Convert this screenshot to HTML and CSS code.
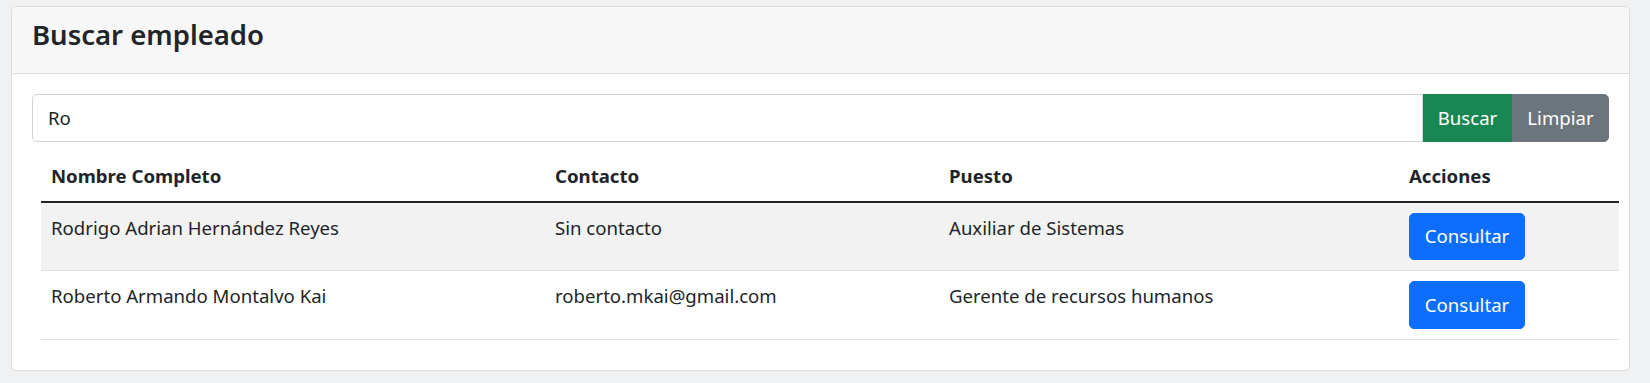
FILE: index.html
```html
<!DOCTYPE html>
<html lang="es">
<head>
<meta charset="utf-8">
<title>Buscar empleado</title>
<link rel="stylesheet" href="styles.css">
</head>
<body>
<div class="page">
  <div class="card">
    <div class="card-header">
      <h4 class="title">Buscar empleado</h4>
    </div>
    <div class="card-body">
      <div class="input-group">
        <input class="form-control" type="text" value="Ro">
        <button class="btn btn-success">Buscar</button>
        <button class="btn btn-secondary">Limpiar</button>
      </div>
      <div class="table-wrap">
        <table class="table">
          <colgroup>
            <col class="c1"><col class="c2"><col class="c3"><col class="c4">
          </colgroup>
          <thead>
            <tr>
              <th>Nombre Completo</th>
              <th>Contacto</th>
              <th>Puesto</th>
              <th>Acciones</th>
            </tr>
          </thead>
          <tbody>
            <tr class="striped">
              <td>Rodrigo Adrian Hernández Reyes</td>
              <td>Sin contacto</td>
              <td>Auxiliar de Sistemas</td>
              <td><button class="btn btn-primary">Consultar</button></td>
            </tr>
            <tr>
              <td>Roberto Armando Montalvo Kai</td>
              <td>roberto.mkai@gmail.com</td>
              <td>Gerente de recursos humanos</td>
              <td><button class="btn btn-primary">Consultar</button></td>
            </tr>
          </tbody>
        </table>
      </div>
    </div>
  </div>
</div>
</body>
</html>
```
FILE: styles.css
```css
* { box-sizing: border-box; }
html, body { margin: 0; padding: 0; }
body {
  background: #f0f1f3;
  font-family: "Noto Sans", "Open Sans", sans-serif;
  font-size: 18.6px;
  line-height: 30px;
  color: #212529;
}
.page {
  padding: 6px 20px 14px 11px;
}
.card {
  background: #fff;
  border: 1px solid #dcdcdc;
  border-radius: 5px;
  overflow: hidden;
}
.card-header {
  background: #f7f7f7;
  border-bottom: 1px solid #dcdcdc;
  padding: 10px 20px;
}
.title {
  margin: 0 0 10px;
  font-size: 27.5px;
  line-height: 36px;
  font-weight: 600;
}
.card-body {
  padding: 20px 20px 30px;
}
.input-group {
  display: flex;
  height: 47.5px;
}
.form-control {
  flex: 1;
  min-width: 0;
  height: 100%;
  border: 1px solid #ced4da;
  border-radius: 5px 0 0 5px;
  padding: 0 15px;
  font: inherit;
  color: #212529;
  outline: none;
}
.btn {
  font: inherit;
  border: 1px solid transparent;
  color: #fff;
  padding: 0;
  text-align: center;
  height: 47.5px;
  cursor: pointer;
}
.btn-success { background: #198754; border-color: #198754; width: 89px; border-radius: 0; }
.btn-secondary { background: #6c757d; border-color: #6c757d; width: 97px; border-radius: 0 5px 5px 0; }
.btn-primary { background: #0d6efd; border-color: #0d6efd; width: 116px; border-radius: 5px; }
.table-wrap {
  margin: 9px -10px 0 9px;
}
.table {
  width: 100%;
  border-collapse: collapse;
  table-layout: fixed;
}
.c1 { width: 504px; }
.c2 { width: 394px; }
.c3 { width: 460px; }
.c4 { width: 220px; }
.table th, .table td {
  text-align: left;
  vertical-align: top;
  padding: 10px;
  border-bottom: 1px solid #dee2e6;
}
.table th {
  font-weight: 700;
  border-bottom: 2px solid #212529;
}
.table tbody tr.striped td {
  background: #f2f2f2;
}
```
